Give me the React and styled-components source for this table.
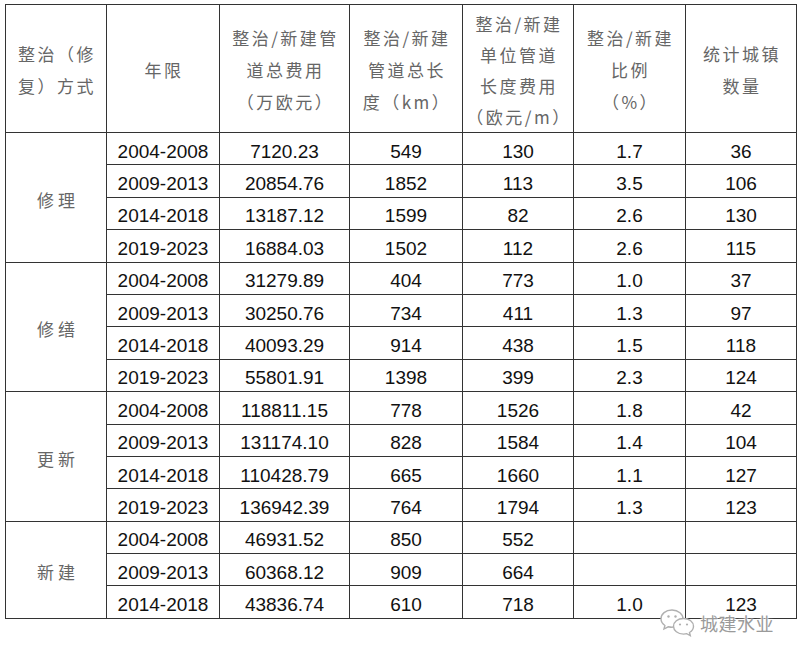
import styled, { createGlobalStyle } from "styled-components";

const GlobalStyle = createGlobalStyle`
    html, body {
        margin: 0;
        padding: 0;
        background: #fff;
    }
`

const Page = styled.div`
    position: relative;
    width: 800px;
    height: 658px;
    padding: 4px 0 0 5px;
    box-sizing: border-box;
    background: #fff;
`

const Table = styled.table`
    width: 791px;
    table-layout: fixed;
    border-collapse: collapse;
    border: 1px solid #333;
`

const HeadRow = styled.tr`
    height: 127px;
`

const BodyRow = styled.tr`
    height: 32.4px;
`

const HeadCell = styled.th`
    border: 1px solid #333;
    padding: ${props => props.lines === 4 ? "3px 0 0 2px" : "2px 0 0 2px"};
    font-family: "Noto Sans CJK SC", "Liberation Sans", sans-serif;
    font-weight: 400;
    font-size: 17px;
    letter-spacing: 2.5px;
    line-height: ${props => props.lines === 4 ? "31px" : "32px"};
    color: #666;
    text-align: center;
    vertical-align: middle;
    white-space: nowrap;
`

const GroupCell = styled.td`
    border: 1px solid #333;
    padding: 4px 0 0 4px;
    font-family: "Noto Sans CJK SC", sans-serif;
    font-size: 17px;
    letter-spacing: 4px;
    color: #666;
    text-align: center;
    vertical-align: middle;
`

const Cell = styled.td`
    border: 1px solid #333;
    padding: 5px 0 0 0;
    font-family: "Liberation Sans", Arial, sans-serif;
    font-size: 19px;
    color: #111;
    text-align: center;
    vertical-align: middle;
    line-height: 1;
`

const Watermark = styled.div`
    position: absolute;
    left: 659px;
    top: 608px;
    display: flex;
    align-items: center;
    gap: 3px;
`

const WatermarkText = styled.span`
    font-family: "Noto Sans CJK SC", sans-serif;
    font-size: 18px;
    color: #9a9a9a;
    letter-spacing: 0.5px;
    text-shadow: 0 0 2px #fff, 0 0 2px #fff, 0 0 3px #fff;
`

const widths = [101, 113, 130, 113, 111, 112, 111];

const headers = [
    ["整治（修", "复）方式"],
    ["年限"],
    ["整治/新建管", "道总费用", "（万欧元）"],
    ["整治/新建", "管道总长", "度（km）"],
    ["整治/新建", "单位管道", "长度费用", "（欧元/m）"],
    ["整治/新建", "比例", "（%）"],
    ["统计城镇", "数量"],
];

const groups = [
    {
        name: "修理",
        rows: [
            ["2004-2008", "7120.23", "549", "130", "1.7", "36"],
            ["2009-2013", "20854.76", "1852", "113", "3.5", "106"],
            ["2014-2018", "13187.12", "1599", "82", "2.6", "130"],
            ["2019-2023", "16884.03", "1502", "112", "2.6", "115"],
        ],
    },
    {
        name: "修缮",
        rows: [
            ["2004-2008", "31279.89", "404", "773", "1.0", "37"],
            ["2009-2013", "30250.76", "734", "411", "1.3", "97"],
            ["2014-2018", "40093.29", "914", "438", "1.5", "118"],
            ["2019-2023", "55801.91", "1398", "399", "2.3", "124"],
        ],
    },
    {
        name: "更新",
        rows: [
            ["2004-2008", "118811.15", "778", "1526", "1.8", "42"],
            ["2009-2013", "131174.10", "828", "1584", "1.4", "104"],
            ["2014-2018", "110428.79", "665", "1660", "1.1", "127"],
            ["2019-2023", "136942.39", "764", "1794", "1.3", "123"],
        ],
    },
    {
        name: "新建",
        rows: [
            ["2004-2008", "46931.52", "850", "552", "", ""],
            ["2009-2013", "60368.12", "909", "664", "", ""],
            ["2014-2018", "43836.74", "610", "718", "1.0", "123"],
        ],
    },
];

function WeChatIcon() {
    return (
        <svg width="38" height="30" viewBox="0 0 38 30" fill="none">
            <path d="M13 2C6.5 2 2 6 2 10.8c0 2.8 1.5 5.1 3.9 6.7L5 21l4.2-2.2c1.2.3 2.5.5 3.8.5 6.5 0 11-4 11-8.5S19.5 2 13 2z"
                fill="#fff" stroke="#b0b0b0" strokeWidth="1.4" />
            <circle cx="9.5" cy="8.5" r="1.2" fill="#b0b0b0" />
            <circle cx="16.5" cy="8.5" r="1.2" fill="#b0b0b0" />
            <path d="M24.5 10.5c-5.8 0-10 3.6-10 7.8s4.2 7.8 10 7.8c1.1 0 2.2-.1 3.2-.4l3.6 1.9-.8-3.1c2.4-1.4 4-3.6 4-6.2 0-4.2-4.2-7.8-10-7.8z"
                fill="#fff" stroke="#b0b0b0" strokeWidth="1.4" />
            <circle cx="21" cy="16.5" r="1.1" fill="#b0b0b0" />
            <circle cx="28" cy="16.5" r="1.1" fill="#b0b0b0" />
        </svg>
    );
}

function App() {
    return (
        <Page>
            <GlobalStyle />
            <Table>
                <colgroup>
                    {widths.map((w, i) => <col key={i} style={{ width: w }} />)}
                </colgroup>
                <thead>
                    <HeadRow>
                        {headers.map((lines, i) => (
                            <HeadCell key={i} lines={lines.length}>
                                {lines.map((l, j) => <div key={j}>{l}</div>)}
                            </HeadCell>
                        ))}
                    </HeadRow>
                </thead>
                <tbody>
                    {groups.map(g => g.rows.map((row, r) => (
                        <BodyRow key={g.name + r}>
                            {r === 0 && <GroupCell rowSpan={g.rows.length}>{g.name}</GroupCell>}
                            {row.map((v, c) => <Cell key={c}>{v}</Cell>)}
                        </BodyRow>
                    )))}
                </tbody>
            </Table>
            <Watermark>
                <WeChatIcon />
                <WatermarkText>城建水业</WatermarkText>
            </Watermark>
        </Page>
    );
}

export default App;
